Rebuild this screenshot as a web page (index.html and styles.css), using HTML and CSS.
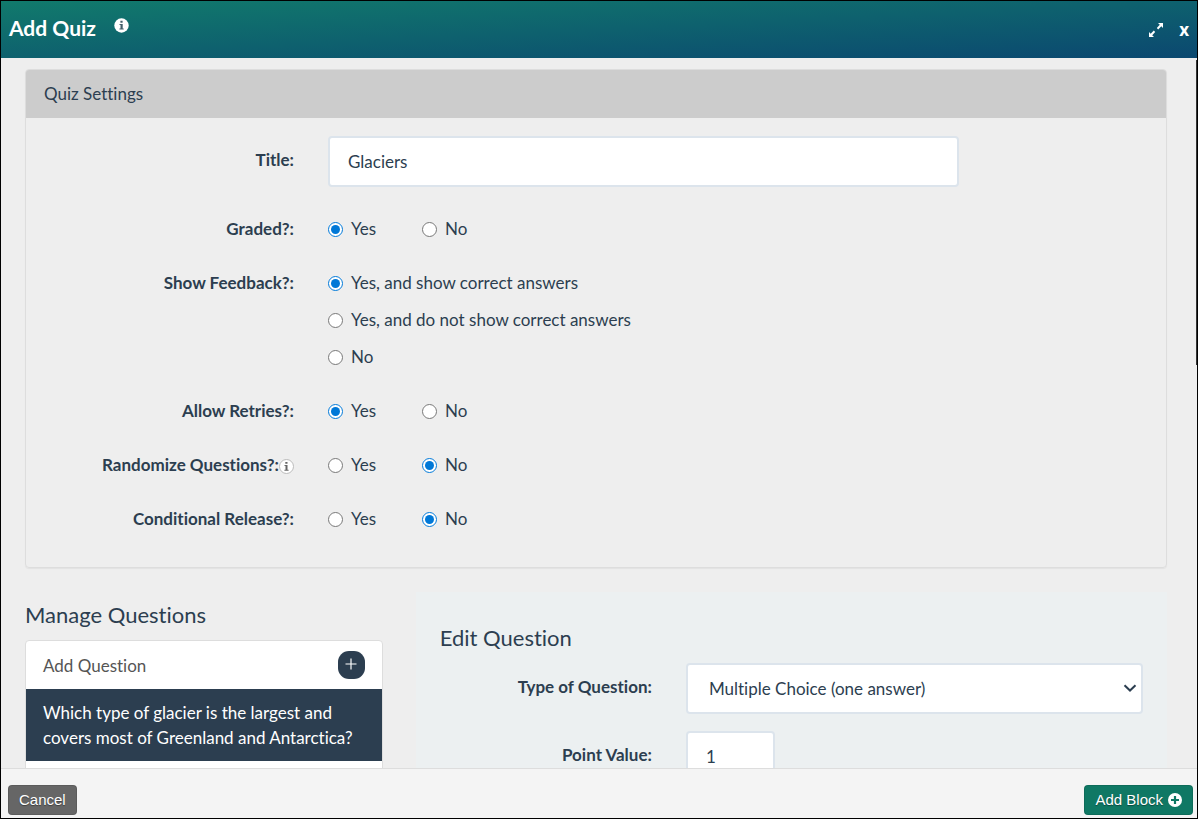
FILE: index.html
```html
<!doctype html>
<html lang="en">
<head>
  <meta charset="utf-8">
  <meta name="viewport" content="width=device-width, initial-scale=1">
  <title>Add Quiz</title>
  <link rel="stylesheet" href="styles.css">
</head>

<body>
  <div class="modal">
    <header class="modal-header">
      <h1 class="modal-title">Add Quiz</h1>
      <button type="button" class="icon-btn info-btn" aria-label="Help">
        <svg width="15" height="15" viewBox="0 0 15 15">
          <circle cx="7.5" cy="7.5" r="7.2" fill="#fff"/>
          <path d="M6.400 2.800h2.200v1.900H6.400zM5.500 6h3.200v4.600h1v1H5.400v-1h1.100V7h-1z" fill="#45606b"/>
        </svg>
      </button>
      <div class="modal-tools">
        <button type="button" class="icon-btn" aria-label="Expand">
          <svg width="14" height="14" viewBox="0 0 14 14">
            <path d="M9 0h5v5l-1.700-1.700L9.200 6.400 7.800 5l3-3.200zM5 14H0V9l1.700 1.700L4.800 7.600 6.200 9l-3 3.200z" fill="#fff"/>
          </svg>
        </button>
        <button type="button" class="icon-btn close-btn" aria-label="Close">x</button>
      </div>
    </header>

    <main class="modal-body">
      <section class="panel">
        <h2 class="panel-heading">Quiz Settings</h2>
        <div class="panel-body">
          <div class="form-row title-row">
            <label class="form-label" for="title">Title:</label>
            <input class="form-control" type="text" id="title" value="Glaciers">
          </div>
          <div class="form-row" role="radiogroup" aria-labelledby="graded-label">
            <span class="form-label" id="graded-label">Graded?:</span>
            <div class="radios">
              <label class="radio"><input type="radio" name="graded" checked>Yes</label>
              <label class="radio"><input type="radio" name="graded">No</label>
            </div>
          </div>
          <div class="form-row" role="radiogroup" aria-labelledby="feedback-label">
            <span class="form-label" id="feedback-label">Show Feedback?:</span>
            <div class="radios radios-stacked">
              <label class="radio"><input type="radio" name="feedback" checked>Yes, and show correct answers</label>
              <label class="radio"><input type="radio" name="feedback">Yes, and do not show correct answers</label>
              <label class="radio"><input type="radio" name="feedback">No</label>
            </div>
          </div>
          <div class="form-row" role="radiogroup" aria-labelledby="retries-label">
            <span class="form-label" id="retries-label">Allow Retries?:</span>
            <div class="radios">
              <label class="radio"><input type="radio" name="retries" checked>Yes</label>
              <label class="radio"><input type="radio" name="retries">No</label>
            </div>
          </div>
          <div class="form-row" role="radiogroup" aria-labelledby="random-label">
            <span class="form-label" id="random-label">Randomize Questions?:<svg class="label-info" width="15" height="15" viewBox="0 0 15 15">
                <circle cx="7.5" cy="7.5" r="7" fill="#fff" stroke="#bbb"/>
                <path d="M6.300 3h2.200v1.800H6.300zM5.500 6h3v4.700h1.100v1H5.400v-1h1.100V7h-1z" fill="#666"/>
              </svg></span>
            <div class="radios">
              <label class="radio"><input type="radio" name="random">Yes</label>
              <label class="radio"><input type="radio" name="random" checked>No</label>
            </div>
          </div>
          <div class="form-row" role="radiogroup" aria-labelledby="release-label">
            <span class="form-label" id="release-label">Conditional Release?:</span>
            <div class="radios">
              <label class="radio"><input type="radio" name="release">Yes</label>
              <label class="radio"><input type="radio" name="release" checked>No</label>
            </div>
          </div>
        </div>
      </section>

      <div class="questions">
        <section class="manage">
          <h2 class="section-title">Manage Questions</h2>
          <ul class="question-list">
            <li class="question-item add-question">
              <span>Add Question</span>
              <button type="button" class="plus-btn" aria-label="Add Question">
                <svg width="12" height="12" viewBox="0 0 12 12">
                  <path d="M6 0.500v11M0.500 6h11" stroke="#fff" stroke-width="1.200"/>
                </svg>
              </button>
            </li>
            <li class="question-item active">Which type of glacier is the largest and covers most of Greenland and Antarctica?</li>
            <li class="question-item"></li>
          </ul>
        </section>

        <section class="edit">
          <h2 class="section-title">Edit Question</h2>
          <div class="edit-row">
            <label class="form-label" for="type">Type of Question:</label>
            <div class="select-wrap">
              <select class="form-control" id="type">
                <option>Multiple Choice (one answer)</option>
              </select>
              <svg class="chevron" width="14" height="8" viewBox="0 0 14 8">
                <path d="M1.500 1.200L7 6.500l5.500-5.300" fill="none" stroke="#2c3e50" stroke-width="2"/>
              </svg>
            </div>
          </div>
          <div class="edit-row">
            <label class="form-label" for="points">Point Value:</label>
            <input class="form-control points" type="text" id="points" value="1">
          </div>
        </section>
      </div>
      <div class="scroll-thumb"></div>
    </main>

    <footer class="modal-footer">
      <button type="button" class="btn btn-cancel">Cancel</button>
      <button type="button" class="btn btn-add">Add Block
        <svg width="14" height="14" viewBox="0 0 14 14">
          <circle cx="7" cy="7" r="7" fill="#fff"/>
          <path d="M7 3v8M3 7h8" stroke="#0f7864" stroke-width="2.200"/>
        </svg>
      </button>
    </footer>
  </div>
</body>
</html>
```

FILE: styles.css
```css
* {
  box-sizing: border-box;
}

body {
  margin: 0;
  color: #2c3e50;
  font-family: Lato, sans-serif;
  font-size: 17px;
  font-variant-ligatures: none;
  line-height: 24px;
}

button,
input,
select {
  margin: 0;
  color: inherit;
  font: inherit;
}

.modal {
  display: flex;
  flex-direction: column;
  height: 100vh;
  border: 1px solid #000;
  background: #eee;
}

/* header */

.modal-header {
  display: flex;
  align-items: center;
  flex: none;
  height: 57px;
  padding: 0 8px 4px 8px;
  background: linear-gradient(to bottom right, #117a6c, #0b4870);
  color: #fff;
}

.modal-title {
  margin: 0;
  font-size: 21px;
  line-height: 24px;
}

.icon-btn {
  display: flex;
  padding: 0;
  border: 0;
  background: none;
  color: #fff;
}

.info-btn {
  margin: 0 0 4px 18px;
}

.modal-tools {
  display: flex;
  align-items: center;
  gap: 16px;
  margin-left: auto;
  padding-top: 4px;
}

.close-btn {
  font-family: "Open Sans", sans-serif;
  font-weight: 700;
}

/* body */

.modal-body {
  position: relative;
  flex: 1;
  min-height: 0;
  padding: 11px 30px 0 24px;
  overflow: hidden;
}

.scroll-thumb {
  position: absolute;
  top: 2px;
  right: 0;
  width: 1px;
  height: 43%;
  background: #333;
}

.panel {
  border: 1px solid #ddd;
  border-radius: 4px;
  box-shadow: 0 1px 1px rgba(0, 0, 0, .05);
}

.panel-heading {
  margin: 0;
  padding: 12px 18px;
  border-radius: 3px 3px 0 0;
  background: #ccc;
  font-size: 17px;
  font-weight: 400;
  line-height: 24px;
}

.panel-body {
  padding: 18px 18px 6px;
}

.form-row {
  display: grid;
  grid-template-columns: 284px 10fr 3fr;
  margin-bottom: 30px;
}

.form-label {
  padding-right: 34px;
  font-weight: 700;
  text-align: right;
}

.title-row .form-label,
.edit-row .form-label {
  padding-top: 12px;
}

.label-info {
  vertical-align: -3px;
}

.form-control {
  width: 100%;
  height: 51px;
  padding: 0 18px;
  border: 2px solid #dce4ec;
  border-radius: 4px;
  background: #fff;
}

.radios {
  display: flex;
  gap: 46px;
}

.radios-stacked {
  flex-direction: column;
  gap: 13px;
}

.radio {
  display: flex;
  align-items: center;
  gap: 8px;
}

.radio input {
  width: 15px;
  height: 15px;
  accent-color: #0078d7;
}

/* questions */

.questions {
  display: grid;
  grid-template-columns: 10fr 21fr;
  gap: 33px;
  margin-top: 24px;
}

.section-title {
  margin: 0;
  font-size: 22px;
  font-weight: 400;
  line-height: 26px;
}

.manage {
  padding-top: 10px;
}

.question-list {
  margin: 12px 0 0;
  padding: 0;
  border: 1px solid #ddd;
  border-radius: 4px;
  background: #fff;
  list-style: none;
}

.question-item {
  min-height: 48px;
  padding: 11px 17px;
  line-height: 25px;
}

.add-question {
  display: flex;
  align-items: center;
  justify-content: space-between;
  padding: 0 17px;
  color: #555;
}

.question-item.active {
  background: #2c3e50;
  color: #fff;
}

.plus-btn {
  display: flex;
  align-items: center;
  justify-content: center;
  width: 27px;
  height: 28px;
  padding: 0 0 2px;
  border: 0;
  border-radius: 11px;
  background: #2c3e50;
}

.edit {
  padding: 33px 24px;
  background: #ecf0f1;
}

.edit .section-title {
  margin-bottom: 12px;
}

.edit-row {
  display: grid;
  grid-template-columns: 7fr 13fr;
  margin-bottom: 17px;
}

.select-wrap {
  position: relative;
}

.select-wrap .form-control {
  padding-left: 21px;
  appearance: none;
}

.chevron {
  position: absolute;
  top: 21px;
  right: 6px;
  pointer-events: none;
}

.points {
  width: 89px;
}

/* footer */

.modal-footer {
  display: flex;
  align-items: flex-end;
  justify-content: space-between;
  flex: none;
  height: 50px;
  padding: 0 4px 3px 7px;
  border-top: 1px solid #ddd;
  background: #f4f4f4;
}

.btn {
  display: flex;
  align-items: center;
  gap: 5px;
  height: 30px;
  padding: 0 10px;
  border: 1px solid rgba(0, 0, 0, .1);
  border-radius: 4px;
  color: #fff;
  font-family: "Liberation Sans", Arial, sans-serif;
  font-size: 15px;
  line-height: 20px;
  text-shadow: 0 1px 1px rgba(0, 0, 0, .4);
}

.btn-cancel {
  background: #666;
}

.btn-add {
  background: #0f7864;
}
```
